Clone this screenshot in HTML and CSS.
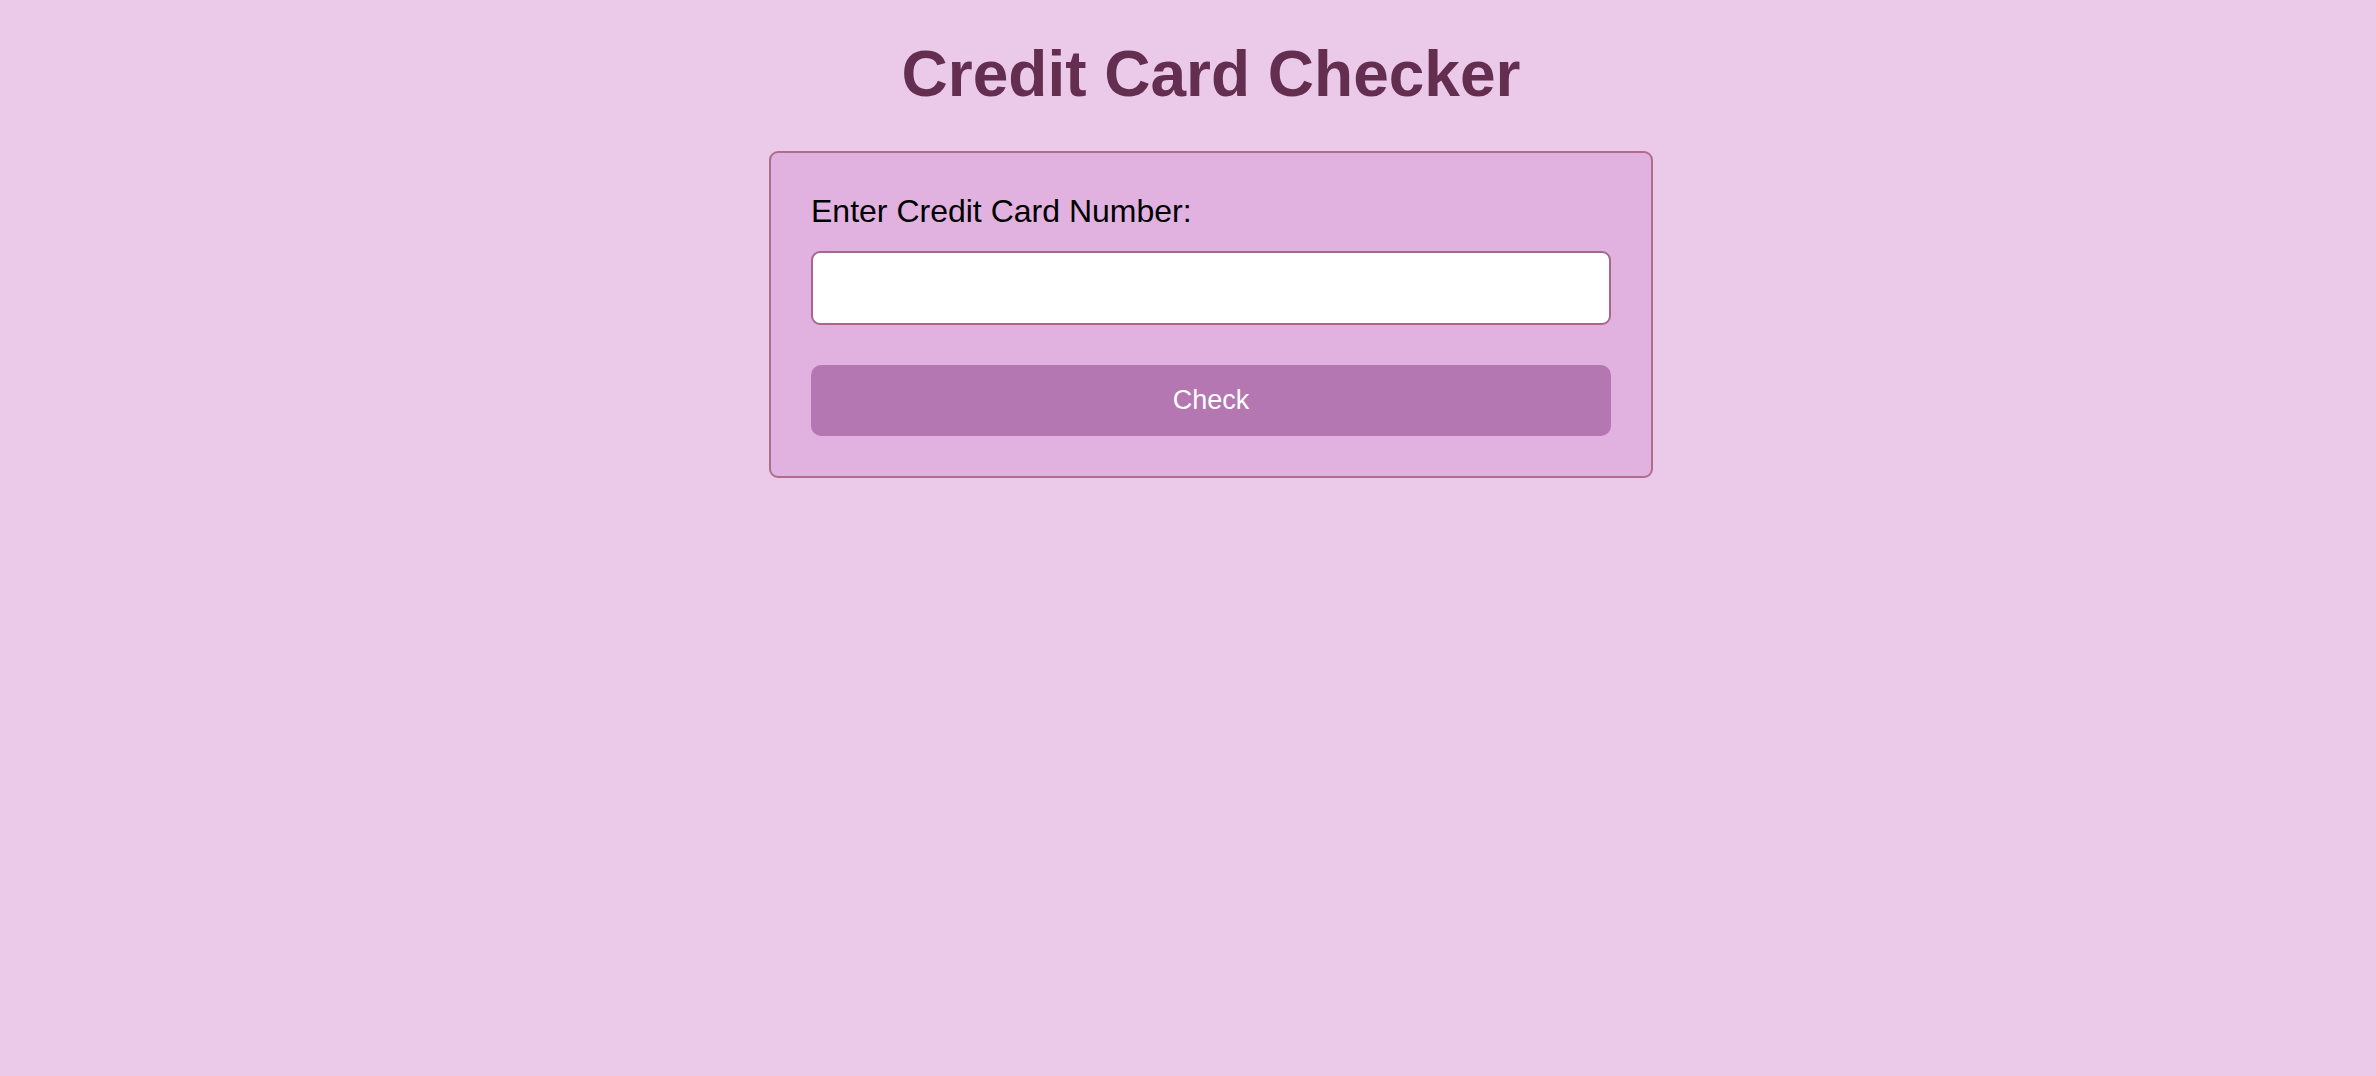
FILE: index.html
```html
<!DOCTYPE html>
<html lang="en">
<head>
<meta charset="utf-8">
<title>Credit Card Checker</title>
<link rel="stylesheet" href="styles.css">
</head>
<body>
<main class="page">
  <h1 class="title">Credit Card Checker</h1>
  <form class="card" onsubmit="return false;">
    <label class="label" for="cc">Enter Credit Card Number:</label>
    <input class="input" id="cc" type="text">
    <button class="btn" type="submit">Check</button>
  </form>
</main>
</body>
</html>
```

FILE: styles.css
```css
html, body {
  margin: 0;
  padding: 0;
}

body {
  background: #ebc9e8;
  font-family: "Liberation Sans", Arial, Helvetica, sans-serif;
  min-height: 100vh;
  padding: 38px 0 0 46px;
  box-sizing: border-box;
}

.page {
  display: flex;
  flex-direction: column;
  align-items: center;
}

.title {
  margin: 0 0 41px 0;
  font-size: 64px;
  line-height: 72px;
  font-weight: 700;
  color: #632e50;
  text-align: center;
}

.card {
  width: 884px;
  box-sizing: border-box;
  background: #e1b2e0;
  border: 2px solid #ae6d8c;
  border-radius: 9px;
  padding: 40px;
  display: flex;
  flex-direction: column;
}

.label {
  display: block;
  font-size: 32px;
  line-height: 36px;
  color: #000;
  margin-bottom: 22px;
}

.input {
  display: block;
  width: 100%;
  height: 74px;
  box-sizing: border-box;
  background: #fff;
  border: 2px solid #a8678a;
  border-radius: 9px;
  margin: 0 0 40px 0;
  padding: 0 14px;
  font-family: inherit;
  font-size: 26px;
  outline: none;
}

.btn {
  display: block;
  width: 100%;
  height: 71px;
  border: none;
  border-radius: 10px;
  background: #b477b2;
  color: #fff;
  font-family: inherit;
  font-size: 27px;
  cursor: pointer;
  padding: 0;
}
```
